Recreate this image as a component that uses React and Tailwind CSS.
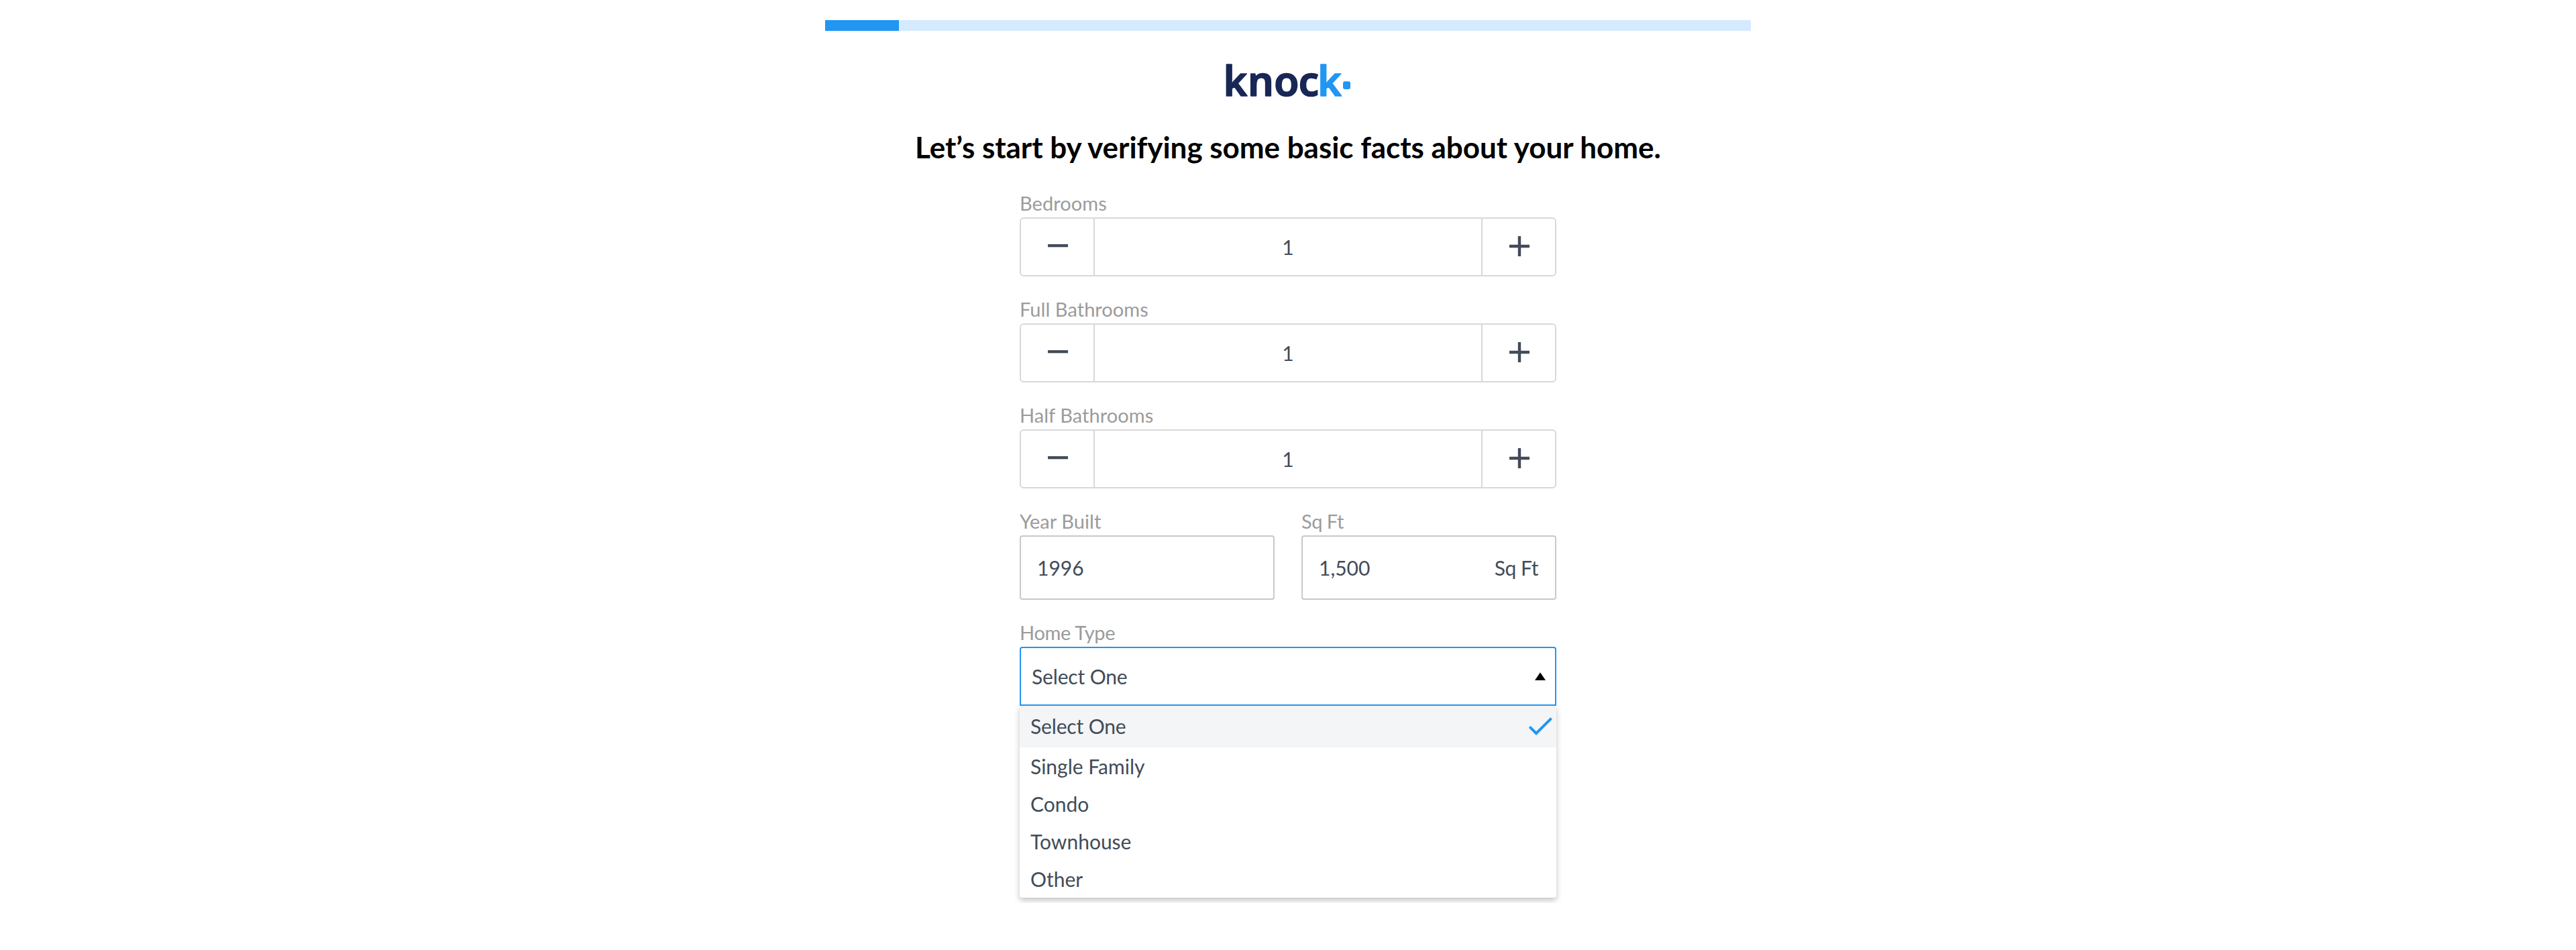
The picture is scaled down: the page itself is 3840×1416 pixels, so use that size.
const steppers = [
  { label: "Bedrooms", value: 1 },
  { label: "Full Bathrooms", value: 1 },
  { label: "Half Bathrooms", value: 1 },
];

const homeTypes = ["Single Family", "Condo", "Townhouse", "Other"];

function Logo() {
  return (
    <svg
      width="188"
      height="52"
      viewBox="0 0 188 52"
      className="block overflow-visible"
      role="img"
      aria-label="knock"
    >
      <g
        fontFamily="Noto Sans, sans-serif"
        fontWeight="600"
        fontSize="61"
        strokeWidth="1.6"
        strokeLinejoin="round"
      >
        <text y="49.4" x="-2.6 34 73 109.5" fill="#182755" stroke="#182755">
          knoc
        </text>
        <text y="49.4" x="138" fill="#2196f3" stroke="#2196f3">
          k
        </text>
      </g>
      <rect x="176" y="27.3" width="11" height="11.7" rx="3" fill="#2196f3" />
    </svg>
  );
}

function Label({ children, className = "tracking-[0.05px]" }) {
  return (
    <label
      className={`mb-1 block text-[29px] leading-[35px] text-[#9b9b9b] ${className}`}
    >
      {children}
    </label>
  );
}

function Stepper({ label, value }) {
  return (
    <div>
      <Label>{label}</Label>
      <div className="flex h-[88px] rounded-md border-2 border-[#d8d8d8]">
        <button className="flex w-[110px] items-center justify-center border-r-2 border-[#d8d8d8] pb-0.5 pl-0.5">
          <svg width="30" height="30" fill="#414c58">
            <rect x="0" y="12" width="30" height="4.3" />
          </svg>
        </button>
        <div className="flex flex-1 items-center justify-center">{value}</div>
        <button className="flex w-[110px] items-center justify-center border-l-2 border-[#d8d8d8] pb-0.5 pl-0.5">
          <svg width="30" height="30" fill="#414c58">
            <path d="M12.8 0h4.4v12.8H30v4.4H17.2V30h-4.4V17.2H0v-4.4h12.8z" />
          </svg>
        </button>
      </div>
    </div>
  );
}

function Field({ label, labelClass, value, unit }) {
  return (
    <div className="flex-1">
      <Label className={labelClass}>{label}</Label>
      <div className="flex h-24 items-center justify-between rounded border-2 border-[#c8c8c8] pr-[25px] pl-6">
        <span>{value}</span>
        {unit && <span className="tracking-[-0.5px]">{unit}</span>}
      </div>
    </div>
  );
}

function HomeTypeSelect() {
  return (
    <div>
      <Label className="tracking-[-0.3px]">Home Type</Label>
      <div className="relative">
        <div className="flex h-[88px] items-center justify-between rounded-t border-2 border-[#2196f3] pr-3.5 pl-4">
          <span className="tracking-[-0.15px]">Select One</span>
          <svg width="16" height="12" fill="#000">
            <path d="M8 0.3 16 12H0z" />
          </svg>
        </div>
        <ul className="absolute top-full left-0 w-full rounded-b bg-white shadow-[0_4px_8px_rgba(0,0,0,0.24)] [clip-path:inset(0_-16px_-8px_-16px)]">
          <li className="flex h-[62px] items-center justify-between bg-[#f3f5f7] pb-0.5 pl-4">
            <span className="tracking-[-0.15px]">Select One</span>
            <svg width="48" height="48" viewBox="0 0 24 24" fill="#2196f3">
              <path d="M9 16.17 4.83 12l-1.42 1.41L9 19 21 7l-1.41-1.41z" />
            </svg>
          </li>
          {homeTypes.map((type) => (
            <li key={type} className="flex h-14 items-center pl-4">
              {type}
            </li>
          ))}
        </ul>
      </div>
    </div>
  );
}

export default function App() {
  return (
    <main className="flex h-[1416px] w-full flex-col items-center bg-white pt-[30px] font-[Lato,sans-serif] text-[30px] leading-9 text-[#414c58]">
      <div className="h-4 w-[1380px] bg-[#d4eaff]">
        <div className="h-full w-[110px] bg-[#2196f3]" />
      </div>
      <div className="mt-12">
        <Logo />
      </div>
      <h1 className="mt-[47px] text-[44px] leading-[52px] font-bold tracking-[-0.04px] whitespace-nowrap text-black">
        Let’s start by verifying some basic facts about your home.
      </h1>
      <form className="mt-10 flex w-[800px] flex-col gap-[31px]">
        {steppers.map((s) => (
          <Stepper key={s.label} {...s} />
        ))}
        <div className="flex gap-10">
          <Field label="Year Built" value="1996" />
          <Field
            label="Sq Ft"
            labelClass="tracking-[-0.5px]"
            value="1,500"
            unit="Sq Ft"
          />
        </div>
        <HomeTypeSelect />
      </form>
    </main>
  );
}
